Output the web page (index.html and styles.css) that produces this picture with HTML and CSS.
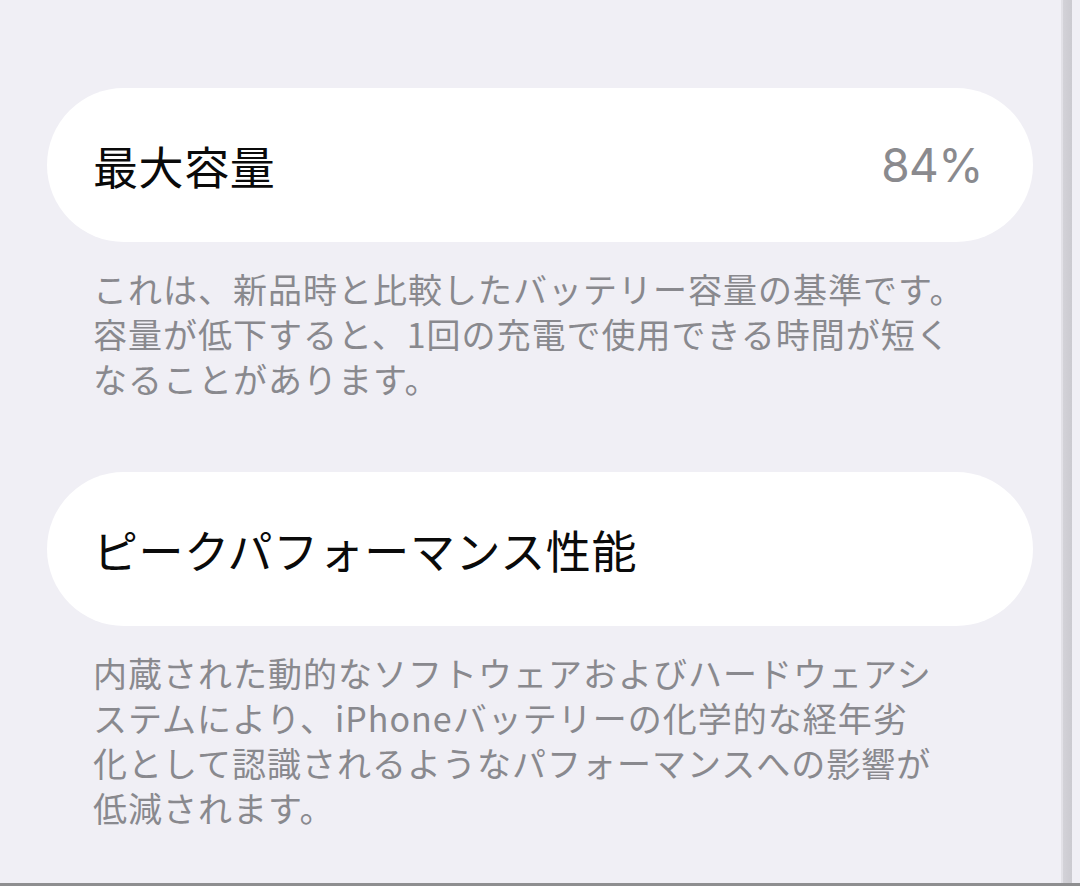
FILE: index.html
```html
<!DOCTYPE html>
<html lang="ja">
<head>
<meta charset="utf-8">
<title>バッテリーの状態</title>
<link rel="stylesheet" href="styles.css">
</head>
<body>
<div class="screen">
  <main class="content">
    <section class="group">
      <div class="cell">
        <span class="cell-title">最大容量</span>
        <span class="cell-value">84%</span>
      </div>
      <p class="footnote">これは、新品時と比較したバッテリー容量の基準です。<br>容量が低下すると、1回の充電で使用できる時間が短く<br>なることがあります。</p>
    </section>
    <section class="group">
      <div class="cell">
        <span class="cell-title">ピークパフォーマンス性能</span>
      </div>
      <p class="footnote">内蔵された動的なソフトウェアおよびハードウェアシ<br>ステムにより、iPhoneバッテリーの化学的な経年劣<br>化として認識されるようなパフォーマンスへの影響が<br>低減されます。</p>
    </section>
  </main>
  <div class="divider"></div>
</div>
</body>
</html>
```
FILE: styles.css
```css
html, body {
  margin: 0;
  padding: 0;
}

body {
  background: #f0eff5;
  font-family: "Noto Sans CJK JP", "Noto Sans", sans-serif;
  overflow: hidden;
}

.screen {
  display: flex;
  height: 883px;
  border-bottom: 3px solid #8e8e90;
  background: #f0eff5;
}

.content {
  width: 986px;
  margin-left: 47px;
  padding-top: 88px;
  display: flex;
  flex-direction: column;
  gap: 71px;
}

.cell {
  height: 154px;
  box-sizing: border-box;
  padding: 0 50px 0 46px;
  background: #ffffff;
  border-radius: 77px;
  display: flex;
  align-items: center;
  justify-content: space-between;
}

.cell-title {
  font-size: 45px;
  line-height: 1;
  color: #0a0a0a;
  letter-spacing: 0.6px;
}

.cell-value {
  font-family: Inter, "Noto Sans", sans-serif;
  font-size: 46px;
  line-height: 1;
  color: #8a8a8e;
  letter-spacing: -0.5px;
}

.footnote {
  margin: 24px 0 0 46px;
  font-size: 34px;
  line-height: 45px;
  color: #89898e;
  letter-spacing: 1px;
  white-space: nowrap;
}

.divider {
  width: 11px;
  margin-left: 28px;
  background: linear-gradient(to right, #e2e1e7 0, #e2e1e7 2px, #d3d2d8 2px, #cbcad0 100%);
}
```
